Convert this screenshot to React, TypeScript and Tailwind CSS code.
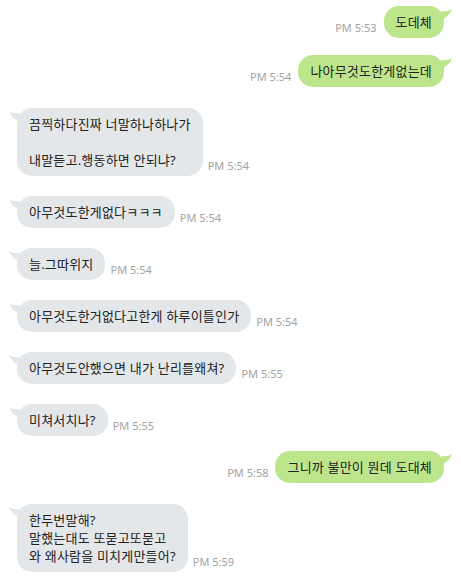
import React from 'react';

type Msg = {
  mine: boolean;
  lines: string[];
  time: string;
  mt: string;
};

const messages: Msg[] = [
  { mine: true, lines: ['도데체'], time: 'PM 5:53', mt: 'mt-[6px]' },
  { mine: true, lines: ['나아무것도한게없는데'], time: 'PM 5:54', mt: 'mt-[17px]' },
  { mine: false, lines: ['끔찍하다진짜 너말하나하나가', '', '내말듣고.행동하면 안되냐?'], time: 'PM 5:54', mt: 'mt-[21px]' },
  { mine: false, lines: ['아무것도한게없다ㅋㅋㅋ'], time: 'PM 5:54', mt: 'mt-[20px]' },
  { mine: false, lines: ['늘.그따위지'], time: 'PM 5:54', mt: 'mt-[20px]' },
  { mine: false, lines: ['아무것도한거없다고한게 하루이틀인가'], time: 'PM 5:54', mt: 'mt-[20px]' },
  { mine: false, lines: ['아무것도안했으면 내가 난리를왜쳐?'], time: 'PM 5:55', mt: 'mt-[20px]' },
  { mine: false, lines: ['미쳐서치나?'], time: 'PM 5:55', mt: 'mt-[20px]' },
  { mine: true, lines: ['그니까 불만이 뭔데 도대체'], time: 'PM 5:58', mt: 'mt-[15px]' },
  { mine: false, lines: ['한두번말해?', '말했는대도 또묻고또묻고', '와 왜사람을 미치게만들어?'], time: 'PM 5:59', mt: 'mt-[21px]' },
];

const Tail: React.FC<{ mine: boolean; color: string }> = ({ mine, color }) =>
  mine ? (
    <svg className="absolute -right-[9px] top-[3px]" width="12" height="10" viewBox="0 0 12 10">
      <path d="M0 2 Q7 3 11 0 Q9 6 2 10 Z" fill={color} />
    </svg>
  ) : (
    <svg className="absolute -left-[9px] top-[3px]" width="12" height="10" viewBox="0 0 12 10">
      <path d="M12 2 Q5 3 1 0 Q3 6 10 10 Z" fill={color} />
    </svg>
  );

const Bubble: React.FC<{ msg: Msg }> = ({ msg }) => {
  const color = msg.mine ? '#bde68c' : '#e4e7ea';
  const time = (
    <span className="mb-[2px] text-[11px] leading-[14px] text-[#a3a3a3] whitespace-nowrap">{msg.time}</span>
  );
  return (
    <div className={`flex items-end ${msg.mine ? 'justify-end pr-[17px]' : 'pl-[17px]'} ${msg.mt}`}>
      {msg.mine && <div className="mr-[7px]">{time}</div>}
      <div
        className={`relative rounded-[15px] px-[12px] py-[7px] text-[13px] leading-[18px] tracking-[0.2px] text-[#222] whitespace-nowrap ${
          msg.mine ? 'bg-[#bde68c]' : 'bg-[#e4e7ea]'
        }`}
      >
        <Tail mine={msg.mine} color={color} />
        {msg.lines.map((l, i) => (
          <div key={i} className="h-[18px]">
            {l}
          </div>
        ))}
      </div>
      {!msg.mine && <div className="ml-[5px]">{time}</div>}
    </div>
  );
};

export default function App() {
  return (
    <div
      className="w-[461px] h-[578px] bg-white overflow-hidden"
      style={{ fontFamily: '"Noto Sans", "Noto Sans CJK KR", sans-serif' }}
    >
      {messages.map((m, i) => (
        <Bubble key={i} msg={m} />
      ))}
    </div>
  );
}
